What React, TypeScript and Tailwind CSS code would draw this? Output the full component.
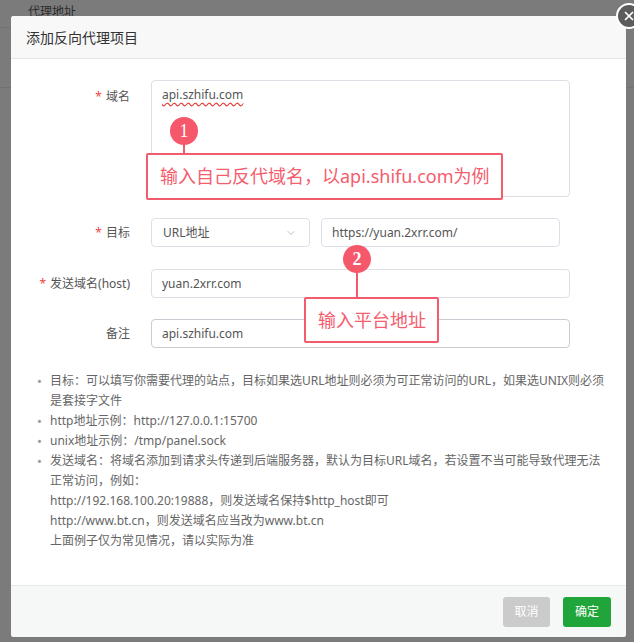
import { ChevronDown, X } from "lucide-react"

const font = "font-['Noto_Sans','Noto_Sans_CJK_SC',sans-serif]"

function Label({ text, required }: { text: string; required?: boolean }) {
  return (
    <div className="w-[119px] shrink-0 text-right text-[12px] text-[#555]">
      {required && <span className="mr-1 text-[#ef4444]">*</span>}
      {text}
    </div>
  )
}

const help = [
  ["目标：可以填写你需要代理的站点，目标如果选URL地址则必须为可正常访问的URL，如果选UNIX则必须", "是套接字文件"],
  ["http地址示例：http://127.0.0.1:15700"],
  ["unix地址示例：/tmp/panel.sock"],
  [
    "发送域名：将域名添加到请求头传递到后端服务器，默认为目标URL域名，若设置不当可能导致代理无法",
    "正常访问，例如：",
    "http://192.168.100.20:19888，则发送域名保持$http_host即可",
    "http://www.bt.cn，则发送域名应当改为www.bt.cn",
    "上面例子仅为常见情况，请以实际为准",
  ],
]

export default function App() {
  return (
    <div className={`relative h-[642px] w-[634px] overflow-hidden bg-[#7b7b7b] ${font}`}>
      {/* page behind the mask */}
      <div className="h-[28px] border-b border-[#727272] pl-[28px] pt-[3px] text-[12px] text-[#2b2b2b]">代理地址</div>
      <div className="h-[60px] border-b border-[#727272]" />

      {/* dialog */}
      <div className="absolute left-[11px] top-[16px] flex h-[621px] w-[615px] flex-col overflow-hidden rounded-[3px] bg-white">
        <div className="flex h-[43px] shrink-0 items-center border-b border-[#e6e6e6] bg-[#f8f8f8] pl-[15px] text-[14px] text-[#333]">
          添加反向代理项目
        </div>

        <div className="flex-1 pt-[21px]">
          <div className="flex items-start">
            <div className="pt-[8px]">
              <Label text="域名" required />
            </div>
            <div className="ml-[21px] h-[117px] w-[419px] rounded-[4px] border border-[#dcdfe6] px-[10px] pt-[5px] text-[12px] text-[#555]">
              <span className="underline decoration-wavy decoration-[#e53935] underline-offset-[3px]">api.szhifu.com</span>
            </div>
          </div>

          <div className="mt-[21px] flex items-center">
            <Label text="目标" required />
            <div className="ml-[21px] flex h-[29px] w-[159px] items-center justify-between rounded-[4px] border border-[#dcdfe6] pl-[11px] pr-[12px] text-[12px] text-[#555]">
              <span>URL地址</span>
              <ChevronDown size={12} strokeWidth={1.5} className="text-[#aaa]" />
            </div>
            <div className="ml-[11px] flex h-[29px] w-[239px] items-center rounded-[4px] border border-[#dcdfe6] px-[10px] text-[12px] text-[#555]">
              https://yuan.2xrr.com/
            </div>
          </div>

          <div className="mt-[22px] flex items-center">
            <Label text="发送域名(host)" required />
            <div className="ml-[21px] flex h-[29px] w-[419px] items-center rounded-[4px] border border-[#dcdfe6] px-[10px] text-[12px] text-[#555]">
              yuan.2xrr.com
            </div>
          </div>

          <div className="mt-[21px] flex items-center">
            <Label text="备注" />
            <div className="ml-[21px] flex h-[29px] w-[419px] items-center rounded-[4px] border border-[#c9ccd3] px-[10px] text-[12px] text-[#555]">
              api.szhifu.com
            </div>
          </div>

          <ul className="mt-[23px] pl-[26px] text-[12px] leading-[20px] text-[#666]">
            {help.map((lines, i) => (
              <li key={i} className="flex whitespace-nowrap">
                <span className="w-[13px] shrink-0 text-[13px] text-[#999]">•</span>
                <div>
                  {lines.map((l, j) => (
                    <div key={j}>{l}</div>
                  ))}
                </div>
              </li>
            ))}
          </ul>
        </div>

        <div className="flex h-[52px] shrink-0 items-center justify-end gap-[13px] border-t border-[#e8eaea] bg-[#f6f8f8] pr-[15px]">
          <button className="h-[30px] w-[47px] rounded-[3px] bg-[#cbcbcb] text-[12px] text-white">取消</button>
          <button className="h-[30px] w-[48px] rounded-[3px] bg-[#20a53a] text-[12px] text-white">确定</button>
        </div>
      </div>

      {/* close button */}
      <div className="absolute left-[616px] top-[3px] flex h-[26px] w-[26px] items-center justify-center rounded-full border-2 border-white bg-[#5c5c5c]">
        <X size={14} strokeWidth={3} className="text-white" />
      </div>

      {/* annotation 1 */}
      <div className="absolute left-[170px] top-[117px] flex h-[28px] w-[28px] items-center justify-center rounded-full bg-[#f5586a] font-['Liberation_Serif',serif] text-[18px] text-white">
        1
      </div>
      <div className="absolute left-[183px] top-[144px] h-[9px] w-[2px] bg-[#f5586a]" />
      <div className="absolute left-[146px] top-[153px] flex h-[47px] w-[357px] items-center rounded-[2px] border-2 border-[#f25c6c] bg-white pl-[12px] text-[18px] text-[#f45d6d]">
        输入自己反代域名，以api.shifu.com为例
      </div>

      {/* annotation 2 */}
      <div className="absolute left-[343px] top-[245px] flex h-[28px] w-[28px] items-center justify-center rounded-full bg-[#f5586a] font-['Liberation_Serif',serif] text-[18px] font-bold text-white">
        2
      </div>
      <div className="absolute left-[356px] top-[272px] h-[25px] w-[2px] bg-[#f5586a]" />
      <div className="absolute left-[304px] top-[297px] flex h-[46px] w-[135px] items-center rounded-[2px] border-2 border-[#f25c6c] bg-white pl-[12px] text-[18px] text-[#f45d6d]">
        输入平台地址
      </div>
    </div>
  )
}
